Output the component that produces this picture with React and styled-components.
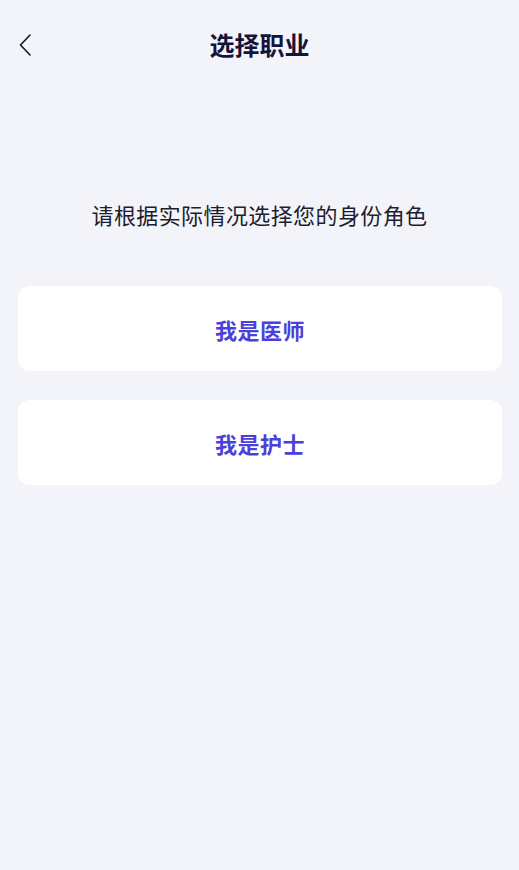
import styled, { createGlobalStyle } from "styled-components";

const GlobalStyle = createGlobalStyle`
  body {
    margin: 0;
    background: #f3f4f9;
    font-family: "Noto Sans CJK SC", "Noto Sans", sans-serif;
  }
`;

const Pagina = styled.div`
  min-height: 870px;
  background: #f3f4f9;
`;

const Topo = styled.div`
  position: relative;
  height: 88px;
  display: flex;
  align-items: center;
  justify-content: center;

  h1 {
    margin: 0;
    font-size: 25px;
    font-weight: 700;
    color: #14133a;
    line-height: 1;
  }
`;

const Voltar = styled.button`
  position: absolute;
  left: 13px;
  top: 30px;
  width: 24px;
  height: 30px;
  padding: 0;
  border: none;
  background: none;
  display: flex;
  align-items: center;
  justify-content: center;
`;

const Subtitulo = styled.p`
  margin: 111px 0 57px;
  text-align: center;
  font-size: 22px;
  letter-spacing: 0.4px;
  color: #1d1d2e;
  line-height: 30px;
`;

const Opcoes = styled.div`
  display: flex;
  flex-direction: column;
  gap: 29px;
  padding: 0 17px 0 18px;
`;

const Opcao = styled.button`
  height: 85px;
  border: none;
  border-radius: 12px;
  background: #ffffff;
  font-family: "Noto Sans CJK SC", "Noto Sans", sans-serif;
  font-size: 22px;
  font-weight: 700;
  color: #4b40d9;
  letter-spacing: 0.5px;
`;

export default function App() {
  return (
    <Pagina>
      <GlobalStyle />
      <Topo>
        <Voltar aria-label="返回">
          <svg width="12" height="22" viewBox="0 0 12 22" fill="none">
            <path d="M11 1L1.5 11L11 21" stroke="#14133a" strokeWidth="1.6" strokeLinecap="round" strokeLinejoin="round" />
          </svg>
        </Voltar>
        <h1>选择职业</h1>
      </Topo>
      <Subtitulo>请根据实际情况选择您的身份角色</Subtitulo>
      <Opcoes>
        <Opcao>我是医师</Opcao>
        <Opcao>我是护士</Opcao>
      </Opcoes>
    </Pagina>
  );
}
